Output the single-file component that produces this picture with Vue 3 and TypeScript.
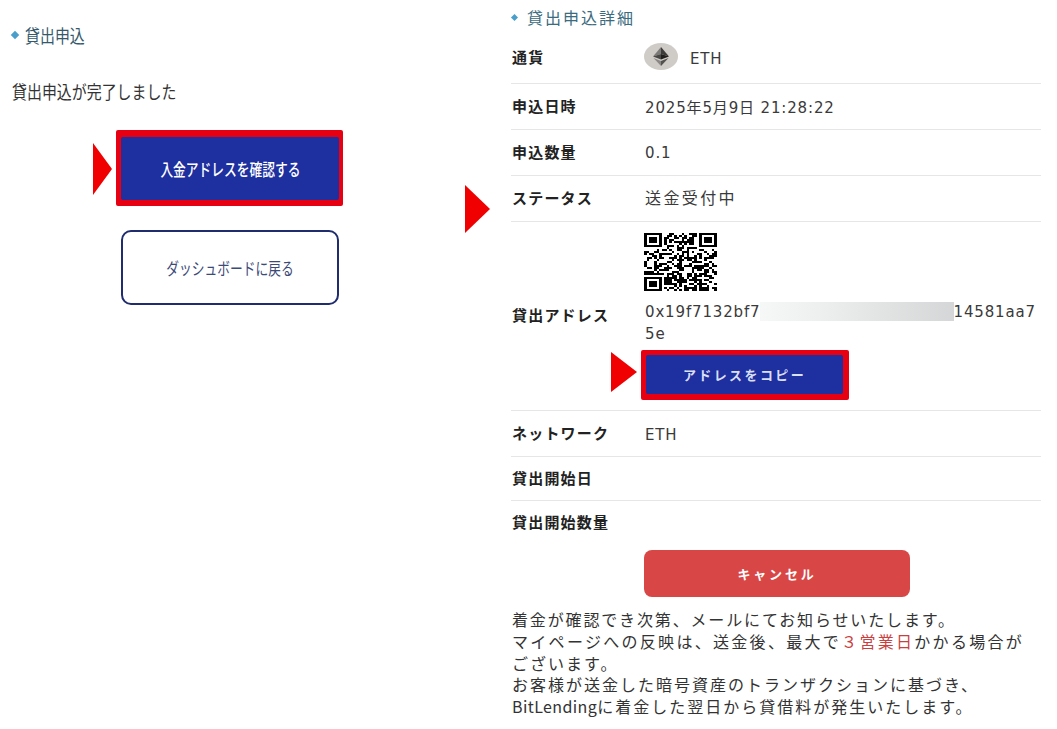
<script setup lang="ts">
const size = 29
function finder(x: number, y: number): boolean | null {
  const anchors = [[0, 0], [size - 7, 0], [0, size - 7]]
  for (const [ax, ay] of anchors) {
    const dx = x - ax
    const dy = y - ay
    if (dx >= -1 && dx <= 7 && dy >= -1 && dy <= 7) {
      if (dx < 0 || dx > 6 || dy < 0 || dy > 6) return false
      return dx === 0 || dx === 6 || dy === 0 || dy === 6 || (dx >= 2 && dx <= 4 && dy >= 2 && dy <= 4)
    }
  }
  return null
}
let seed = 19731
function rnd(): number {
  seed = (seed * 16807) % 2147483647
  return seed / 2147483647
}
let qrPath = ''
for (let y = 0; y < size; y++) {
  for (let x = 0; x < size; x++) {
    const f = finder(x, y)
    const on = f === null ? rnd() > 0.47 : f
    if (on) qrPath += `M${x} ${y}h1v1h-1z`
  }
}
const rows = [
  { label: '申込日時', value: '2025年5月9日 21:28:22' },
  { label: '申込数量', value: '0.1' },
]
</script>

<template>
  <main class="page">
    <section class="left">
      <h2 class="left-title"><i class="diamond"></i><span class="squeeze">貸出申込</span></h2>
      <p class="left-msg"><span class="squeeze">貸出申込が完了しました</span></p>
      <div class="left-actions">
        <div class="hilite hilite-big">
          <span class="arrow arrow-big"></span>
          <button class="btn-primary big"><span class="squeeze-c">入金アドレスを確認する</span></button>
        </div>
        <button class="btn-outline"><span class="squeeze-c">ダッシュボードに戻る</span></button>
      </div>
    </section>

    <section class="right">
      <h2 class="right-title"><i class="diamond small"></i>貸出申込詳細</h2>

      <div class="row first">
        <div class="label">通貨</div>
        <div class="value coin">
          <svg class="eth" viewBox="0 0 34 27" width="34" height="27" aria-hidden="true">
            <ellipse cx="17" cy="13.5" rx="17" ry="13.5" fill="#cfcbc6" />
            <path d="M17 4 L9 13.5 L17 11 Z" fill="#7c7a78" />
            <path d="M17 4 L25 13.5 L17 11 Z" fill="#3e3c3a" />
            <path d="M9 13.5 L17 11 L17 16.5 Z" fill="#4a4846" />
            <path d="M25 13.5 L17 11 L17 16.5 Z" fill="#201f1e" />
            <path d="M9.5 15 L17 23 L17 18 Z" fill="#8a8886" />
            <path d="M24.5 15 L17 23 L17 18 Z" fill="#54524f" />
          </svg>
          <span class="latin-low">ETH</span>
        </div>
      </div>

      <div v-for="r in rows" :key="r.label" class="row">
        <div class="label">{{ r.label }}</div>
        <div class="value">{{ r.value }}</div>
      </div>

      <div class="row status">
        <span class="arrow arrow-status"></span>
        <div class="label">ステータス</div>
        <div class="value cjk-wide">送金受付中</div>
      </div>

      <div class="row address">
        <div class="label">貸出アドレス</div>
        <div class="value addr-value">
          <svg class="qr" :viewBox="`0 0 ${size} ${size}`" preserveAspectRatio="none" aria-hidden="true">
            <path :d="qrPath" fill="#000" shape-rendering="crispEdges" />
          </svg>
          <div class="addr-text">0x19f7132bf7<span class="blur"></span>14581aa7<br />5e</div>
          <div class="hilite hilite-copy">
            <span class="arrow arrow-copy"></span>
            <button class="btn-primary copy">アドレスをコピー</button>
          </div>
        </div>
      </div>

      <div class="row">
        <div class="label">ネットワーク</div>
        <div class="value"><span class="latin-low">ETH</span></div>
      </div>
      <div class="row short">
        <div class="label">貸出開始日</div>
        <div class="value"></div>
      </div>
      <div class="row short last">
        <div class="label">貸出開始数量</div>
        <div class="value"></div>
      </div>

      <div class="cancel-wrap">
        <button class="btn-cancel">キャンセル</button>
      </div>

      <p class="notes">
        <span class="tight">着金が確認でき次第、メールにてお知らせいたします。</span><br />
        <span class="wide">マイページへの反映は、送金後、最大で<span class="em">３営業日</span>かかる場合が</span><br />
        ございます。<br />
        お客様が送金した暗号資産のトランザクションに基づき、<br />
        <span class="latin">BitLending</span>に着金した翌日から貸借料が発生いたします。
      </p>
    </section>
  </main>
</template>

<style>
html, body { margin: 0; background: #fff; }
</style>

<style scoped>
.page {
  display: flex;
  width: 1057px;
  height: 729px;
  overflow: hidden;
  background: #fff;
  font-family: "DejaVu Sans", "Noto Sans CJK JP", sans-serif;
  color: #333;
}
.left {
  width: 511px;
  flex: none;
  padding: 23px 0 0 12px;
  box-sizing: border-box;
  font-family: "Noto Sans CJK JP", sans-serif;
}
.left-title {
  display: flex;
  align-items: center;
  margin: 0;
  height: 24px;
  font-size: 18px;
  font-weight: 400;
  color: #35586b;
}
.diamond {
  display: block;
  flex: none;
  width: 6px;
  height: 6px;
  margin-right: 7px;
  background: #4a9fca;
  transform: rotate(45deg);
}
.diamond.small {
  width: 5px;
  height: 5px;
  margin: 0 10px 0 1px;
}
.squeeze {
  display: inline-block;
  transform: scaleX(0.83);
  transform-origin: left center;
  white-space: nowrap;
}
.squeeze-c {
  display: inline-block;
  transform: scaleX(0.75);
  white-space: nowrap;
}
.left-msg {
  margin: 32px 0 0;
  height: 24px;
  line-height: 24px;
  font-size: 18px;
  color: #333;
}
.left-actions {
  display: flex;
  flex-direction: column;
  align-items: flex-start;
  margin: 27px 0 0 104px;
  width: 227px;
}
.hilite {
  position: relative;
  background: #e60012;
  border-radius: 2px;
  box-sizing: border-box;
}
.hilite-big {
  width: 227px;
  height: 76px;
  padding: 7px 4px 6px 5px;
}
.btn-primary {
  display: flex;
  align-items: center;
  justify-content: center;
  width: 100%;
  height: 100%;
  padding: 0;
  border: 0;
  border-radius: 2px;
  background: #1e2fa0;
  color: #fff;
  font-family: inherit;
}
.big { font-size: 17px; font-weight: 500; }
.btn-outline {
  display: flex;
  align-items: center;
  justify-content: center;
  width: 218px;
  height: 75px;
  margin: 24px 0 0 5px;
  padding: 0;
  box-sizing: border-box;
  border: 2px solid #1f2c6e;
  border-radius: 10px;
  background: #fff;
  color: #3c4a78;
  font-family: inherit;
  font-size: 17px;
}
.arrow {
  position: absolute;
  width: 0;
  height: 0;
  border-style: solid;
  border-color: transparent transparent transparent #f00000;
}
.arrow-big {
  left: -23px;
  top: 13px;
  border-width: 26px 0 26px 19px;
}
.arrow-status {
  left: -46px;
  top: 9px;
  border-width: 24px 0 24px 25px;
}
.arrow-copy {
  left: -30px;
  top: 2px;
  border-width: 20px 0 20px 26px;
}
.right {
  width: 530px;
  flex: none;
  padding-top: 5px;
  box-sizing: border-box;
}
.right-title {
  display: flex;
  align-items: center;
  margin: 0 0 1px;
  height: 24px;
  font-size: 16px;
  font-weight: 400;
  letter-spacing: 2px;
  color: #3b6b80;
  font-family: "Noto Sans CJK JP", sans-serif;
}
.row {
  position: relative;
  display: grid;
  grid-template-columns: 134px 1fr;
  align-items: center;
  height: 46px;
  box-sizing: border-box;
  border-bottom: 1px solid #e6e6e6;
}
.row.first { height: 54px; }
.row.short { height: 44px; }
.row.last { border-bottom: 0; }
.row.address { height: 189px; }
.label {
  padding: 0 0 3px 1px;
  font-family: "Noto Sans CJK JP", sans-serif;
  font-size: 15px;
  font-weight: 700;
  letter-spacing: 1.2px;
  color: #222;
}
.first .label { padding-bottom: 0; }
.value {
  font-size: 15px;
  letter-spacing: 0.85px;
  color: #3a3a3a;
  white-space: nowrap;
}
.cjk-wide {
  padding-bottom: 3px;
  letter-spacing: 2.4px;
  font-size: 16px;
}
.latin-low {
  position: relative;
  top: 1px;
}
.first .latin-low { top: 2px; }
.coin {
  display: flex;
  align-items: center;
  gap: 12px;
  margin-left: -1px;
}
.eth { display: block; flex: none; }
.addr-value {
  display: flex;
  flex-direction: column;
  align-items: flex-start;
  height: 100%;
}
.qr {
  display: block;
  width: 73px;
  height: 58px;
  margin: 11px 0 0 -1px;
}
.addr-text {
  margin-top: 10px;
  line-height: 22px;
  font-size: 15px;
}
.blur {
  display: inline-block;
  width: 194px;
  height: 19px;
  margin-left: -1px;
  vertical-align: -4px;
  background: linear-gradient(90deg, #f6f7f7 0%, #eef0f0 30%, #e3e5e5 60%, #d4d6d7 100%);
}
.hilite-copy {
  width: 208px;
  height: 50px;
  margin: 5px 0 0 -4px;
  padding: 5px 6px 6px 5px;
}
.copy {
  font-size: 13px;
  font-weight: 700;
  letter-spacing: 2.4px;
  color: #d9dff5;
  font-family: "Noto Sans CJK JP", sans-serif;
}
.cancel-wrap {
  padding: 5px 0 0 133px;
}
.btn-cancel {
  display: block;
  width: 266px;
  height: 47px;
  padding: 0;
  border: 0;
  border-radius: 8px;
  background: #d94646;
  color: #fff;
  font-family: "Noto Sans CJK JP", sans-serif;
  font-size: 13px;
  font-weight: 700;
  letter-spacing: 2.8px;
}
.notes {
  margin: 12px 0 0;
  padding-left: 1px;
  font-family: "Noto Sans CJK JP", sans-serif;
  font-size: 16px;
  line-height: 21.8px;
  letter-spacing: 2px;
  color: #333;
  white-space: nowrap;
}
.tight { letter-spacing: 1.85px; }
.wide { letter-spacing: 2.3px; }
.latin { letter-spacing: 0.4px; }
.em { color: #c9413f; }
</style>
